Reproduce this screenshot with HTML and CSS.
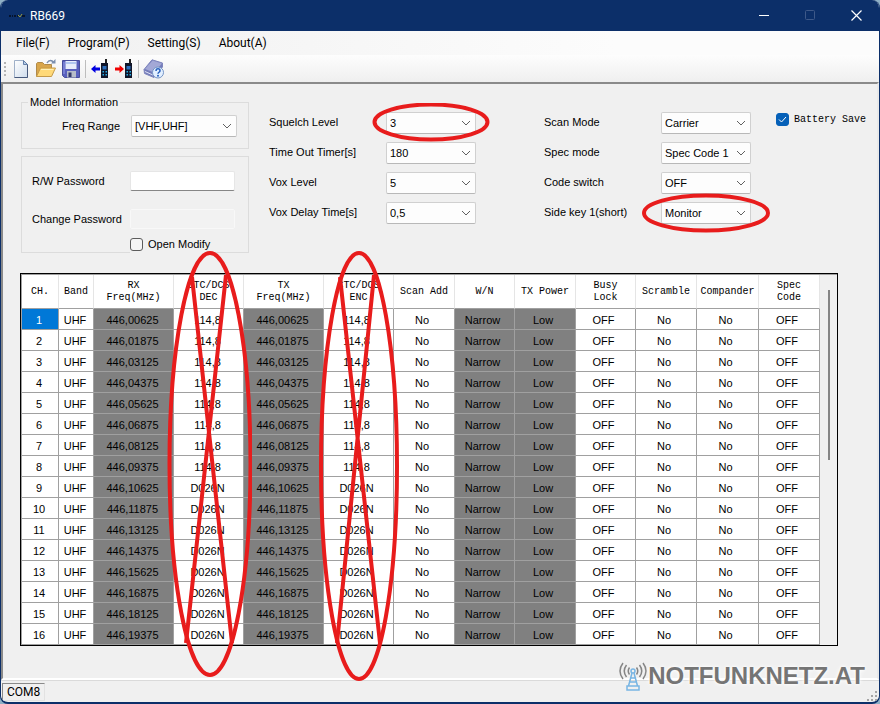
FILE: index.html
```html
<!DOCTYPE html>
<html lang="en">
<head>
	<meta charset="UTF-8">
	<title>RB669</title>
	<link rel="stylesheet" href="styles.css">
</head>
<body>
<div class="window">
	<header class="titlebar">
		<svg class="app-icon" width="16" height="6" viewBox="0 0 16 6"><path d="M0 3h2M3 3h1M5 3h2M8 3h1M13 3h3" stroke="#05142e" stroke-width="2"/><path d="M9 2l2 2 2-3" fill="none" stroke="#9c9a3c"/></svg>
		<h1>RB669</h1>
		<div class="win-buttons">
			<button type="button" aria-label="Minimize"><svg width="11" height="11" viewBox="0 0 11 11"><path d="M0 5.500h10" stroke="#fff"/></svg></button>
			<button type="button" aria-label="Maximize" disabled><svg width="11" height="11" viewBox="0 0 11 11"><rect x=".5" y=".5" width="9" height="9" rx="1" fill="none" stroke="#3e5989"/></svg></button>
			<button type="button" aria-label="Close"><svg width="11" height="11" viewBox="0 0 11 11"><path d="M.5.5l10 10M10.500.5l-10 10" stroke="#fff" stroke-width="1.200"/></svg></button>
		</div>
	</header>
	<nav class="menubar">
		<button type="button">File(F)</button>
		<button type="button">Program(P)</button>
		<button type="button">Setting(S)</button>
		<button type="button">About(A)</button>
	</nav>
	<div class="toolbar">
		<span class="grip"></span>
		<button type="button" aria-label="New">
			<svg width="20" height="20" viewBox="0 0 20 20"><defs><linearGradient id="pg" x1="0" y1="0" x2="1" y2="1"><stop offset="0" stop-color="#fff"/><stop offset="1" stop-color="#cfdcec"/></linearGradient></defs><path d="M3.500 1.500h9l4 4v13h-13z" fill="url(#pg)" stroke="#9fb0c8"/><path d="M16.500 5.500v13h-13" fill="none" stroke="#47597c"/><path d="M12.500 1.500v4h4z" fill="#b6cce6" stroke="#6480aa"/></svg>
		</button>
		<button type="button" aria-label="Open">
			<svg width="22" height="20" viewBox="0 0 22 20"><path d="M1.500 17.500v-13l1-1h5l2 2h7v4" fill="#d9a64c" stroke="#b08a4a"/><path d="M1.500 17.500l4-8.500h15l-4 8.500z" fill="#ffd978" stroke="#c49a4a"/><path d="M6 10.500h12.500" stroke="#fff0b8"/><path d="M12 4c2-3.500 5-3 6.500-.5" fill="none" stroke="#7c8fae" stroke-width="1.500"/><path d="M16 4.500h4.500V0z" fill="#7c8fae"/></svg>
		</button>
		<button type="button" aria-label="Save">
			<svg width="20" height="20" viewBox="0 0 20 20"><path d="M1.500 1.500h17v17h-15l-2-2z" fill="#5960bd" stroke="#484e9c"/><path d="M4.500 2h11v8h-11z" fill="#e8eefb"/><path d="M5 4h10" stroke="#b1c7ef" stroke-width="2"/><path d="M6 12h9v6.500H6z" fill="#b7bdc9"/><path d="M7.500 13.500h3V18h-3z" fill="#33386a"/><path d="M3 3v12" stroke="#969eea"/></svg>
		</button>
		<span class="sep"></span>
		<button type="button" aria-label="Read from radio">
			<svg width="20" height="20" viewBox="0 0 20 20"><path d="M1 10l4.500-4v2.500H10v3H5.500V14z" fill="#0000e0"/><path d="M15 0h2v5h-2z" fill="#222"/><path d="M11 4h7v15h-7z" fill="#111629"/><path d="M12.500 7h4v3.500h-4z" fill="#2c6fbd"/><path d="M12.500 12h1.500v1.500h-1.500zM15.500 12H17v1.500h-1.500zM12.500 15h1.500v1.500h-1.500zM15.500 15H17v1.500h-1.500z" fill="#26ade8"/></svg>
		</button>
		<button type="button" aria-label="Write to radio">
			<svg width="20" height="20" viewBox="0 0 20 20"><path d="M10 10L5.500 6v2.500H1v3h4.500V14z" fill="#f00000"/><path d="M15 0h2v5h-2z" fill="#222"/><path d="M11 4h7v15h-7z" fill="#111629"/><path d="M12.500 7h4v3.500h-4z" fill="#2c6fbd"/><path d="M12.500 12h1.500v1.500h-1.500zM15.500 12H17v1.500h-1.500zM12.500 15h1.500v1.500h-1.500zM15.500 15H17v1.500h-1.500z" fill="#26ade8"/></svg>
		</button>
		<span class="sep"></span>
		<button type="button" aria-label="Help">
			<svg width="22" height="20" viewBox="0 0 22 20"><path d="M1 10.500L9 .8 19.500 4v4L11 18.500 1.500 14.500z" fill="#747cba" stroke="#7e85bd"/><path d="M2 10L9.500 1.500 19 4.500 11 13.500z" fill="#a3a8d6"/><path d="M2 12.500l9 4" stroke="#dfe2f4"/><circle cx="15" cy="13.500" r="5.500" fill="#e2efff" stroke="#7393c4"/><path d="M13 12c0-3 4-2.700 4-.3 0 1.600-2 1.500-2 3" fill="none" stroke="#2760bd" stroke-width="1.500"/><circle cx="15" cy="16.700" r="1" fill="#2760bd"/></svg>
		</button>
	</div>

	<main class="client">
		<form class="settings">
			<div class="groups">
				<fieldset class="model">
					<legend>Model Information</legend>
					<label for="freq">Freq Range</label>
					<select id="freq"><option>[VHF,UHF]</option></select>
				</fieldset>
				<fieldset class="password">
					<label for="rw">R/W Password</label>
					<input type="password" id="rw">
					<label for="change">Change Password</label>
					<input type="password" id="change" disabled>
					<label class="open-modify"><input type="checkbox">Open Modify</label>
				</fieldset>
			</div>
			<div class="fields">
				<label for="squelch">Squelch Level</label>
				<div class="pick">
					<select id="squelch"><option>3</option></select>
					<svg class="mark" width="118" height="40" viewBox="0 0 118 40"><ellipse cx="59" cy="19" rx="56.500" ry="17.500"/></svg>
				</div>
				<label for="tot">Time Out Timer[s]</label>
				<select id="tot"><option>180</option></select>
				<label for="vox">Vox Level</label>
				<select id="vox"><option>5</option></select>
				<label for="delay">Vox Delay Time[s]</label>
				<select id="delay"><option>0,5</option></select>
			</div>
			<div class="fields modes">
				<label for="scan">Scan Mode</label>
				<select id="scan"><option>Carrier</option></select>
				<label for="spec">Spec mode</label>
				<select id="spec"><option>Spec Code 1</option></select>
				<label for="code">Code switch</label>
				<select id="code"><option>OFF</option></select>
				<label for="side">Side key 1(short)</label>
				<div class="pick">
					<select id="side"><option>Monitor</option></select>
					<svg class="mark" width="128" height="40" viewBox="0 0 128 40"><ellipse cx="64" cy="20" rx="62" ry="17.500"/></svg>
				</div>
			</div>
			<label class="battery"><input type="checkbox" checked>Battery Save</label>
		</form>

		<div class="grid-frame">
			<table>
				<colgroup>
					<col class="w-ch"><col class="w-band"><col class="w-freq"><col class="w-ctc"><col class="w-freq"><col class="w-ctc">
					<col class="w-mid"><col class="w-narrow"><col class="w-mid"><col class="w-narrow"><col class="w-mid"><col class="w-wide"><col class="w-mid">
				</colgroup>
				<thead>
					<tr>
						<th>CH.</th>
						<th>Band</th>
						<th>RX<br>Freq(MHz)</th>
						<th class="struck">CTC/DCS<br>DEC
							<svg class="strike" width="86" height="430" viewBox="0 0 86 430"><ellipse cx="44" cy="213" rx="40.500" ry="211"/><path d="M26 26l40 366M60 24L20 392"/></svg>
						</th>
						<th>TX<br>Freq(MHz)</th>
						<th class="struck">CTC/DCS<br>ENC
							<svg class="strike" width="86" height="434" viewBox="0 0 86 434"><ellipse cx="43" cy="215" rx="38" ry="213"/><path d="M24 26l40 366M58 24L21 392"/></svg>
						</th>
						<th>Scan Add</th>
						<th>W/N</th>
						<th>TX Power</th>
						<th>Busy<br>Lock</th>
						<th>Scramble</th>
						<th>Compander</th>
						<th>Spec<br>Code</th>
					</tr>
				</thead>
				<tbody id="channels"></tbody>
			</table>
			<div class="scroll"><span class="thumb"></span></div>
		</div>
	</main>

	<footer class="statusbar">
		<span class="port">COM8</span>
		<svg class="resize" width="12" height="12" viewBox="0 0 12 12"><path d="M9 1h2v2H9zM9 5h2v2H9zM5 5h2v2H5zM9 9h2v2H9zM5 9h2v2H5zM1 9h2v2H1z" fill="#a5a5a5"/></svg>
	</footer>

	<div class="watermark">
		<svg width="30" height="32" viewBox="0 0 30 32">
			<g fill="none" stroke="#858585" stroke-width="1.500"><path d="M5 3q-6 8 0 16M8.500 5q-4.500 6 0 12M11.500 7.500q-2.500 3.500 0 7M25 3q6 8 0 16M21.500 5q4.500 6 0 12M18.500 7.500q2.500 3.500 0 7"/></g>
			<g fill="none" stroke="#78b5e3" stroke-width="1.500"><circle cx="15" cy="11" r="2"/><path d="M14 13l-3.500 13M16 13l3.500 13M13 18h4M12 22h6M9 26h12v4H9z"/></g>
		</svg>
		<span>NOTFUNKNETZ.AT</span>
	</div>
</div>

<script type="text/javascript">
	var tbody=document.getElementById("channels");
	for(var i=1;i<=16;i++){
		//channel step is 12.5 kHz
		var freq=(446.00625+(i-1)*0.0125).toFixed(5).replace(".",",");
		var tone=i<=8?"114,8":"D026N";
		var row=[i,"UHF",freq,tone,freq,tone,"No","Narrow","Low","OFF","No","No","OFF"];
		var tr=document.createElement("tr");
		for(var j=0;j<row.length;j++){
			var td=document.createElement("td");
			td.innerHTML=row[j];
			if(j==2||j==4||j==7||j==8){
				td.className="locked";
			}
			if(i==1&&j==0){
				td.className="selected";
			}
			tr.appendChild(td);
		}
		tbody.appendChild(tr);
	}
</script>
</body>
</html>
```
FILE: styles.css
```css
*{
	box-sizing:border-box;
}

body{
	margin:0;
	background:#8fb0c6;
	font-family:Roboto,"Liberation Sans",sans-serif;
	font-size:12px;
	color:#000;
}

button{
	border:0;
	padding:0;
	background:none;
	font:inherit;
	color:inherit;
}

svg{
	display:block;
}

.window{
	position:relative;
	display:flex;
	flex-direction:column;
	min-height:100vh;
	border:1px solid #0c2f69;
	border-top:0;
	border-bottom-width:2px;
	border-radius:8px;
	background:#f0f0f0;
	overflow:hidden;
}

/* title bar */
.titlebar{
	display:flex;
	align-items:center;
	height:31px;
	padding-left:8px;
	background:#0c2f69;
	color:#fff;
}

.titlebar h1{
	margin:0 0 0 5px;
	font-size:12px;
	font-weight:normal;
}

.win-buttons{
	display:flex;
	margin-left:auto;
}

.win-buttons button{
	display:flex;
	align-items:center;
	justify-content:center;
	width:46px;
	height:31px;
}

/* menu and tools */
.menubar{
	display:flex;
	gap:18px;
	height:24px;
	padding-left:15px;
	background:linear-gradient(to right,#f0f0f0,#fcfcfc 70%);
}

.toolbar{
	display:flex;
	align-items:center;
	gap:4px;
	height:27px;
	padding-left:3px;
	background:linear-gradient(#fdfdfd,#efefef);
}

.grip{
	width:2px;
	height:14px;
	margin-right:1px;
	background:repeating-linear-gradient(#b4b4b4 0 2px,transparent 2px 4px);
}

.sep{
	width:1px;
	height:18px;
	background:#bdbdbd;
}

/* client area */
.client{
	flex:1;
	padding:12px 39px 32px 17px;
	border:2px solid;
	border-color:#8a8a8a #fff #fff #8a8a8a;
	border-right-color:#e9e9e9;
	font-family:"Liberation Sans",sans-serif;
	font-size:11px;
}

.settings{
	display:flex;
	align-items:flex-start;
	margin-bottom:20px;
}

.settings > *{
	flex:none;
}

.groups{
	width:228px;
	margin-left:1px;
}

fieldset{
	margin:0;
	padding:0;
	border:1px solid #dcdcdc;
}

legend{
	height:12px;
	margin-left:6px;
	padding:0 2px;
	line-height:12px;
}

select{
	width:90px;
	height:22px;
	padding:0 20px 0 3px;
	border:1px solid #d0d0d0;
	border-bottom-color:#b8b8b8;
	border-radius:2px;
	appearance:none;
	background:#fdfdfd url("data:image/svg+xml,%3Csvg xmlns='http://www.w3.org/2000/svg' width='10' height='6'%3E%3Cpath d='M1 1l4 4 4-4' fill='none' stroke='%23606060'/%3E%3C/svg%3E") no-repeat right 4px center;
	font:inherit;
	color:#000;
}

.model{
	display:flex;
	align-items:center;
	justify-content:flex-end;
	gap:11px;
	height:53px;
	padding:7px 11px 12px 0;
}

.model select{
	width:106px;
}

.password{
	display:grid;
	grid-template-columns:98px 105px;
	align-items:center;
	height:97px;
	margin-top:7px;
	padding:14px 0 0 10px;
	row-gap:18px;
}

.password input[type=password]{
	width:105px;
	height:20px;
	border:1px solid #e6e6e6;
	border-bottom-color:#868686;
	border-radius:2px;
	background:#fff;
}

.password input[type=password]:disabled{
	border-color:#f8f8f8;
	background:#f2f2f2;
}

input[type=checkbox]{
	flex:none;
	width:13px;
	height:13px;
	margin:0;
	border:1px solid #5c5c5c;
	border-radius:3px;
	appearance:none;
	background:#f5f5f5;
}

input[type=checkbox]:checked{
	border-color:#0560b8;
	background:#0560b8 url("data:image/svg+xml,%3Csvg xmlns='http://www.w3.org/2000/svg' width='9' height='7'%3E%3Cpath d='M1 3.500l2.500 2.500L8 1' fill='none' stroke='white'/%3E%3C/svg%3E") no-repeat center;
}

.open-modify{
	display:flex;
	align-items:center;
	grid-column:2;
	gap:5px;
	width:80px;
	height:18px;
	margin-top:-12px;
	background:#f0f0f0;
	white-space:nowrap;
}

.fields{
	display:grid;
	grid-template-columns:117px 90px;
	align-items:center;
	gap:8px 0;
	margin:16px 0 0 20px;
}

.modes{
	margin-left:68px;
}

.fields label{
	padding-bottom:2px;
}

.pick{
	position:relative;
}

.mark{
	position:absolute;
	top:50%;
	left:50%;
	transform:translate(-50%,-50%);
}

.mark,.strike{
	fill:none;
	stroke:#e81c1c;
	stroke-width:4;
	pointer-events:none;
}

.battery{
	display:flex;
	align-items:center;
	gap:5px;
	margin:17px 0 0 25px;
	font-family:"Liberation Mono",monospace;
	font-size:10px;
	white-space:nowrap;
}

/* channel table */
.grid-frame{
	display:flex;
	border:1px solid #000;
	box-shadow:inset 1px 1px #a0a0a0;
	padding:1px 0 0 1px;
}

table{
	flex:1;
	table-layout:fixed;
	border-collapse:separate;
	border-spacing:0;
	background:#fff;
}

.w-ch{width:37px;}
.w-band{width:35px;}
.w-freq{width:80px;}
.w-ctc{width:70px;}
.w-mid{width:61px;}
.w-narrow{width:60px;}
.w-wide{width:62px;}

th{
	height:34px;
	padding:0;
	border-right:1px solid #e5e5e5;
	border-bottom:1px solid #a0a0a0;
	font-family:"Liberation Mono",monospace;
	font-size:10px;
	font-weight:normal;
	line-height:12px;
}

td{
	height:21px;
	padding:2px 4px 0 0;
	border-right:1px solid #a0a0a0;
	border-bottom:1px solid #a0a0a0;
	line-height:18px;
	text-align:center;
}

td:nth-child(-n+5){
	padding-right:2px;
}

.locked{
	background:#808080;
}

.selected{
	background:#0078d7;
	color:#fff;
}

.struck{
	position:relative;
}

.strike{
	position:absolute;
	top:-24px;
	left:50%;
	z-index:1;
	transform:translateX(-50%);
}

.scroll{
	width:17px;
	padding:15px 0 0 8px;
}

.thumb{
	display:block;
	width:2px;
	height:170px;
	background:#858585;
}

/* status bar */
.statusbar{
	display:flex;
	align-items:center;
	justify-content:space-between;
	height:22px;
	padding:0 1px;
	border-top:1px solid #dadada;
}

.port{
	height:18px;
	padding:0 4px;
	border:1px solid;
	border-color:#8a8a8a #e2e2e2 #e2e2e2 #8a8a8a;
	line-height:17px;
}

.resize{
	align-self:flex-end;
}

.watermark{
	position:absolute;
	right:14px;
	bottom:10px;
	display:flex;
	align-items:center;
	font:bold 24px "Liberation Sans",sans-serif;
	color:#757575;
	text-shadow:0 0 3px #fff,0 0 5px #fff;
}
```
